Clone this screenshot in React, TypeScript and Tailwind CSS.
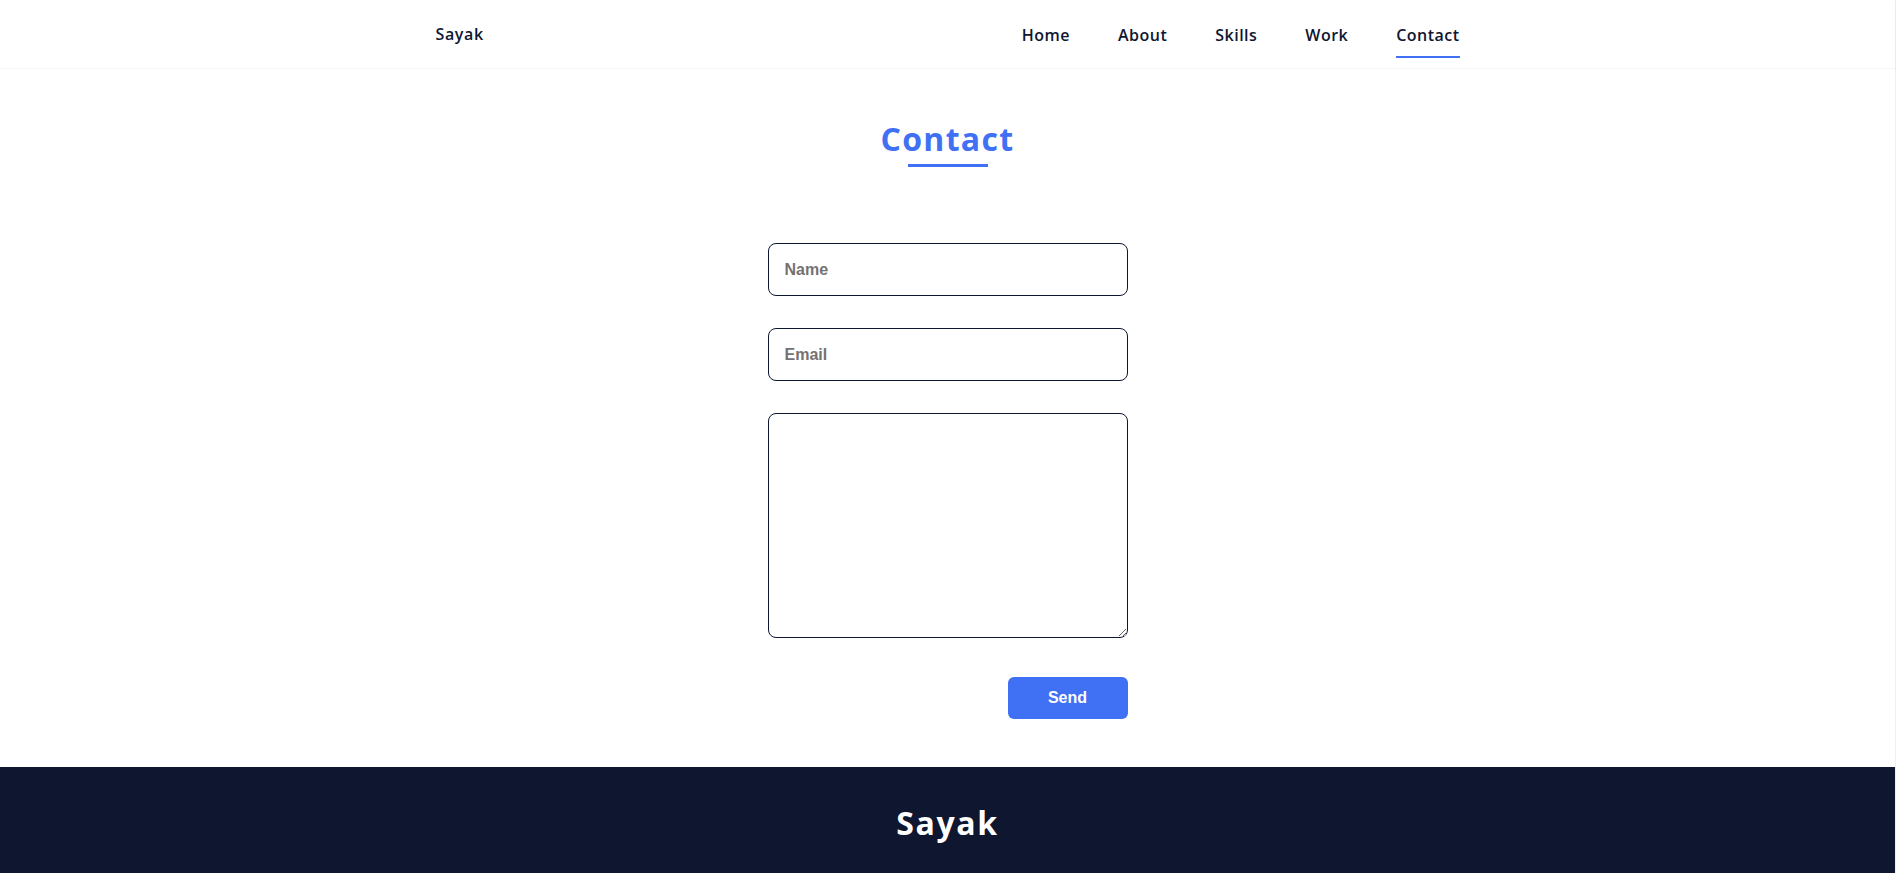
import React from 'react';

const navItems = ['Home', 'About', 'Skills', 'Work', 'Contact'];

export default function App() {
  return (
    <div className="min-h-screen w-full border-r border-[#f0f0f0] bg-white font-['Open_Sans',sans-serif] text-[#0e1630]">
      <header className="h-[69px] w-full border-b border-[#f7f7f7] bg-white shadow-[0_1px_3px_rgba(146,161,176,0.18)]">
        <nav className="mx-auto flex h-full max-w-[1024px] items-center justify-between">
          <a href="#" className="text-base font-semibold tracking-[0.04em]">Sayak</a>
          <ul className="flex items-center">
            {navItems.map((item) => (
              <li key={item} className="ml-12">
                <a
                  href="#"
                  className={`relative block pt-[1px] text-base font-semibold tracking-[0.03em] ${
                    item === 'Contact' ? 'after:absolute after:left-0 after:top-[34px] after:h-[2px] after:w-full after:bg-[#4070f4]' : ''
                  }`}
                >
                  {item}
                </a>
              </li>
            ))}
          </ul>
        </nav>
      </header>

      <main className="bg-white">
        <section className="pt-[46px] pb-12">
          <div className="flex flex-col items-center">
            <h2 className="text-[32px] font-bold leading-[48px] tracking-[0.04em] text-[#4070f4]">Contact</h2>
            <span className="mt-[1px] h-[3px] w-20 bg-[#4070f4]" />
          </div>

          <form className="mx-auto mt-[76px] flex w-[360px] flex-col font-['Liberation_Sans',Arial,sans-serif]">
            <input
              type="text"
              placeholder="Name"
              className="h-[53px] rounded-lg border border-[#0e1630] px-4 text-base font-bold outline-none placeholder:text-[#767171]"
            />
            <input
              type="email"
              placeholder="Email"
              className="mt-8 h-[53px] rounded-lg border border-[#0e1630] px-4 text-base font-bold outline-none placeholder:text-[#767171]"
            />
            <textarea className="mt-8 h-[225px] rounded-lg border border-[#0e1630] p-4 text-base font-bold outline-none" />
            <button
              type="button"
              className="mt-[39px] ml-auto h-[42px] w-[120px] rounded-md bg-[#4070f4] text-base font-bold text-white"
            >
              Send
            </button>
          </form>
        </section>
      </main>

      <footer className="bg-[#0e1630] py-8 text-center">
        <p className="text-[32px] font-bold leading-[48px] tracking-[0.05em] text-white">Sayak</p>
      </footer>
    </div>
  );
}
